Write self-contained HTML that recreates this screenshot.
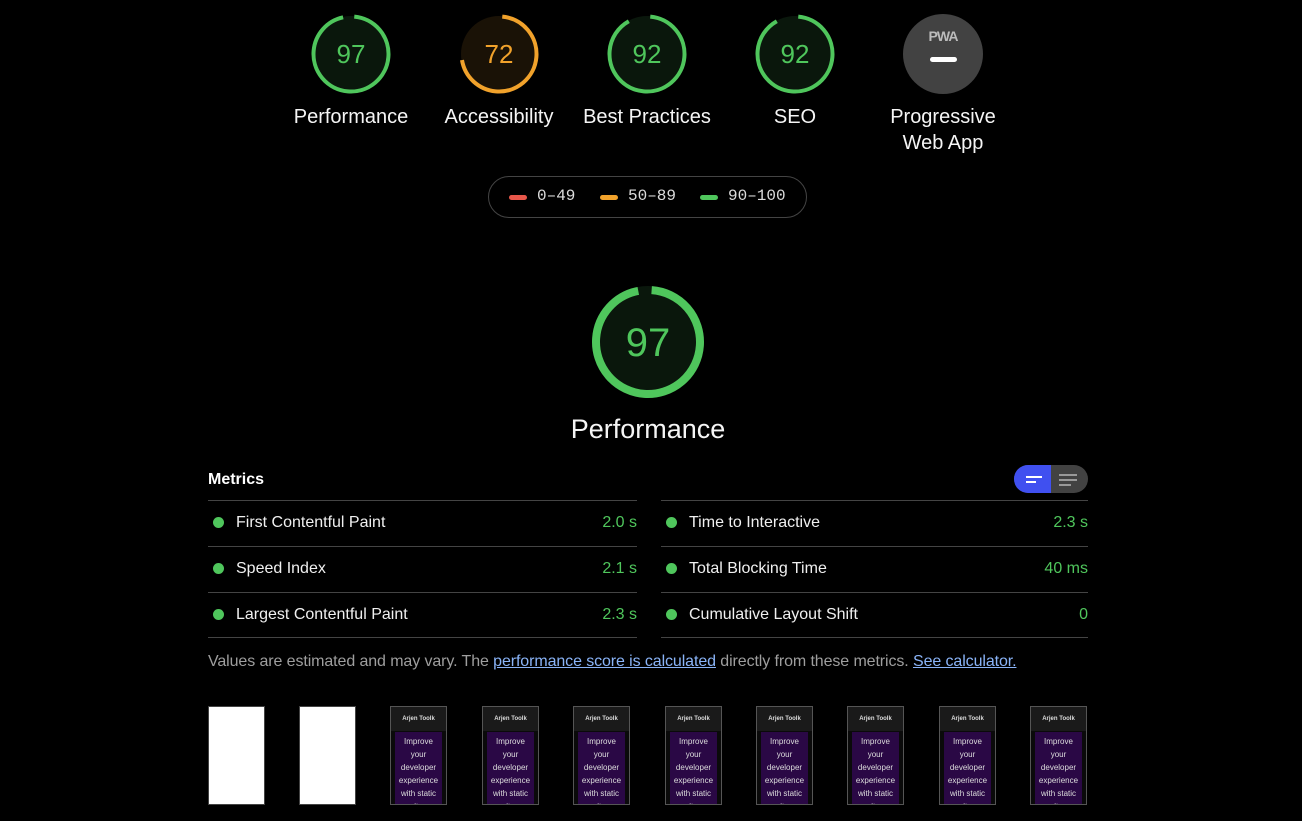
<!DOCTYPE html>
<html><head><meta charset="utf-8"><style>
*{margin:0;padding:0;box-sizing:border-box}
body{width:1302px;height:821px;background:#000;color:#fff;font-family:"Liberation Sans",sans-serif;position:relative;overflow:hidden}
.a{position:absolute}
.lbl{position:absolute;font-size:20px;text-align:center;width:160px;line-height:26px;color:#f5f5f5}
.row{position:absolute;height:46px;border-top:1px solid #444;font-size:16px;color:#f0f0f0}
.row .d{position:absolute;left:5px;top:16px;width:11px;height:11px;border-radius:50%;background:#4fc65c}
.row .t{position:absolute;left:28px;top:13px}
.row .v{position:absolute;right:0;top:13px;color:#4fc65c}
.fr{position:absolute;top:706px;width:57px;height:99px;border:1px solid #555;background:#0a0a0a;overflow:hidden}
.fr.w{background:#fff;border-color:#444}
.fr .h{position:absolute;left:0;right:0;top:0;height:24px;background:#1a1a1a;font-size:6px;font-weight:bold;text-align:center;color:#ddd;padding-top:9px}
.fr .p{position:absolute;left:4px;right:4px;top:25px;bottom:0;background:#2a0845;font-size:8px;line-height:13px;text-align:center;color:#ddd;padding-top:3px}
</style></head><body>
<svg class="a" style="left:0;top:0" width="1302" height="460">
 <g font-family="Liberation Sans" text-anchor="middle">
  <circle cx="351" cy="54" r="38" fill="#0a170c"/>
  <circle cx="351" cy="54" r="37.5" fill="none" stroke="#4fc65c" stroke-width="4" stroke-dasharray="224 300" transform="rotate(-85 351 54)"/>
  <text x="351" y="63" font-size="26" fill="#4fc65c">97</text>
  <circle cx="499" cy="54" r="38" fill="#1a1206"/>
  <circle cx="499" cy="54" r="37.5" fill="none" stroke="#f1a22b" stroke-width="4" stroke-dasharray="167 300" transform="rotate(-85 499 54)"/>
  <text x="499" y="63" font-size="26" fill="#f1a22b">72</text>
  <circle cx="647" cy="54" r="38" fill="#0a170c"/>
  <circle cx="647" cy="54" r="37.5" fill="none" stroke="#4fc65c" stroke-width="4" stroke-dasharray="213 300" transform="rotate(-85 647 54)"/>
  <text x="647" y="63" font-size="26" fill="#4fc65c">92</text>
  <circle cx="795" cy="54" r="38" fill="#0a170c"/>
  <circle cx="795" cy="54" r="37.5" fill="none" stroke="#4fc65c" stroke-width="4" stroke-dasharray="213 300" transform="rotate(-85 795 54)"/>
  <text x="795" y="63" font-size="26" fill="#4fc65c">92</text>
  <circle cx="943" cy="54" r="40" fill="#424242"/>
  <text x="943" y="41" font-size="14" font-weight="bold" fill="#bbb" letter-spacing="-1">PWA</text>
  <rect x="930" y="57" width="27" height="5" rx="2.5" fill="#fff"/>
  <circle cx="648" cy="342" r="56" fill="#0a170c"/>
  <circle cx="648" cy="342" r="52" fill="none" stroke="#4fc65c" stroke-width="8" stroke-dasharray="313 400" transform="rotate(-86 648 342)"/>
  <text x="648" y="356" font-size="40" fill="#4fc65c">97</text>
 </g>
</svg>
<div class="lbl" style="left:271px;top:104px">Performance</div>
<div class="lbl" style="left:419px;top:104px">Accessibility</div>
<div class="lbl" style="left:567px;top:104px">Best Practices</div>
<div class="lbl" style="left:715px;top:104px">SEO</div>
<div class="lbl" style="left:863px;top:104px">Progressive<br>Web App</div>
<div class="a" style="left:488px;top:176px;width:319px;height:42px;border:1px solid #444;border-radius:21px;font-family:'Liberation Mono',monospace;font-size:16px;color:#ddd">
 <span class="a" style="left:20px;top:18px;width:18px;height:5px;border-radius:3px;background:#e8574a"></span><span class="a" style="left:48px;top:10px">0–49</span>
 <span class="a" style="left:111px;top:18px;width:18px;height:5px;border-radius:3px;background:#f1a22b"></span><span class="a" style="left:139px;top:10px">50–89</span>
 <span class="a" style="left:211px;top:18px;width:18px;height:5px;border-radius:3px;background:#4fc65c"></span><span class="a" style="left:239px;top:10px">90–100</span>
</div>
<div class="a" style="left:448px;top:414px;width:400px;text-align:center;font-size:27px;color:#f5f5f5">Performance</div>
<div class="a" style="left:208px;top:471px;font-size:16px;font-weight:bold">Metrics</div>
<div class="a" style="left:1014px;top:465px;width:74px;height:28px;border-radius:14px;overflow:hidden;background:#424242">
 <div class="a" style="left:0;top:0;width:37px;height:28px;background:#4050f0"></div>
 <div class="a" style="left:12px;top:11px;width:16px;height:2px;background:#fff"></div>
 <div class="a" style="left:12px;top:16px;width:10px;height:2px;background:#fff"></div>
 <div class="a" style="left:45px;top:9px;width:18px;height:2px;background:#999"></div>
 <div class="a" style="left:45px;top:14px;width:18px;height:2px;background:#999"></div>
 <div class="a" style="left:45px;top:19px;width:12px;height:2px;background:#999"></div>
</div>
<div class="row" style="left:208px;top:500px;width:429px"><span class="d"></span><span class="t">First Contentful Paint</span><span class="v">2.0 s</span></div>
<div class="row" style="left:208px;top:546px;width:429px"><span class="d"></span><span class="t">Speed Index</span><span class="v">2.1 s</span></div>
<div class="row" style="left:208px;top:592px;width:429px;border-bottom:1px solid #444"><span class="d"></span><span class="t">Largest Contentful Paint</span><span class="v">2.3 s</span></div>
<div class="row" style="left:661px;top:500px;width:427px"><span class="d"></span><span class="t">Time to Interactive</span><span class="v">2.3 s</span></div>
<div class="row" style="left:661px;top:546px;width:427px"><span class="d"></span><span class="t">Total Blocking Time</span><span class="v">40 ms</span></div>
<div class="row" style="left:661px;top:592px;width:427px;border-bottom:1px solid #444"><span class="d"></span><span class="t">Cumulative Layout Shift</span><span class="v">0</span></div>
<div class="a" style="left:208px;top:653px;font-size:16px;color:#9e9e9e;white-space:nowrap;letter-spacing:-0.1px">Values are estimated and may vary. The <u style="color:#8ab4f8">performance score is calculated</u> directly from these metrics. <u style="color:#8ab4f8">See calculator.</u></div>
<div class="fr w" style="left:208px"></div>
<div class="fr w" style="left:299px"></div>
<div class="fr" style="left:390px"><div class="h">Arjen Toolk</div><div class="p">Improve<br>your<br>developer<br>experience<br>with static<br>sites</div></div>
<div class="fr" style="left:482px"><div class="h">Arjen Toolk</div><div class="p">Improve<br>your<br>developer<br>experience<br>with static<br>sites</div></div>
<div class="fr" style="left:573px"><div class="h">Arjen Toolk</div><div class="p">Improve<br>your<br>developer<br>experience<br>with static<br>sites</div></div>
<div class="fr" style="left:665px"><div class="h">Arjen Toolk</div><div class="p">Improve<br>your<br>developer<br>experience<br>with static<br>sites</div></div>
<div class="fr" style="left:756px"><div class="h">Arjen Toolk</div><div class="p">Improve<br>your<br>developer<br>experience<br>with static<br>sites</div></div>
<div class="fr" style="left:847px"><div class="h">Arjen Toolk</div><div class="p">Improve<br>your<br>developer<br>experience<br>with static<br>sites</div></div>
<div class="fr" style="left:939px"><div class="h">Arjen Toolk</div><div class="p">Improve<br>your<br>developer<br>experience<br>with static<br>sites</div></div>
<div class="fr" style="left:1030px"><div class="h">Arjen Toolk</div><div class="p">Improve<br>your<br>developer<br>experience<br>with static<br>sites</div></div>
</body></html>
